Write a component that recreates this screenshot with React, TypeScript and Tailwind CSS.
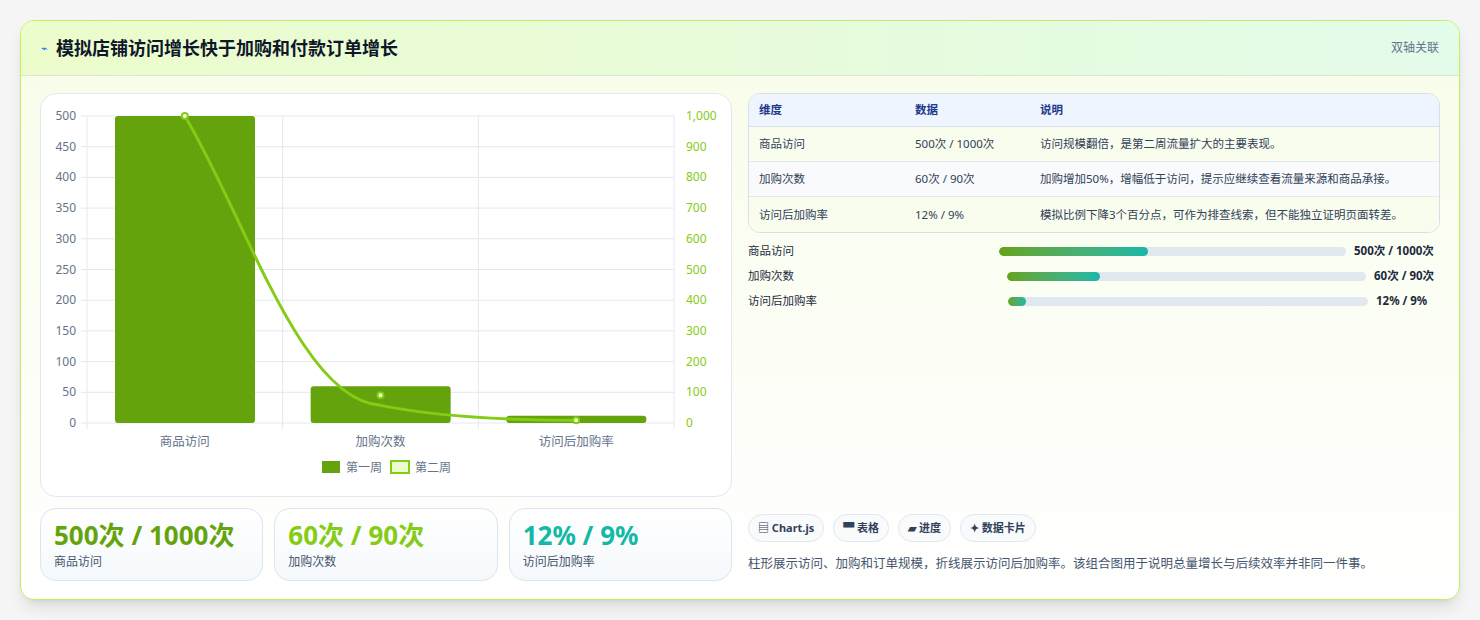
import React from "react";

const font = { fontFamily: '"Noto Sans", "Noto Sans CJK SC", sans-serif' };

function Chart() {
  const x0 = 46, x1 = 633, yTop = 22, yBot = 329;
  const h = yBot - yTop;
  const ticksL = [500, 450, 400, 350, 300, 250, 200, 150, 100, 50, 0];
  const ticksR = [1000, 900, 800, 700, 600, 500, 400, 300, 200, 100, 0];
  const cw = (x1 - x0) / 3;
  const cats = ["商品访问", "加购次数", "访问后加购率"];
  const w1 = [500, 60, 12];
  const w2 = [1000, 90, 9];
  const yl = (v: number) => yBot - (v / 500) * h;
  const yr = (v: number) => yBot - (v / 1000) * h;
  const pts = w2.map((v, i) => [x0 + cw * (i + 0.5), yr(v)]);
  const path = `M${pts[0][0]},${pts[0][1]} C${pts[0][0] + 60},${pts[0][1] + 100} ${pts[1][0] - 80},${pts[1][1] + 5} ${pts[1][0]},${pts[1][1] + 10} C${pts[1][0] + 60},${pts[1][1] + 22} ${pts[2][0] - 60},${pts[2][1]} ${pts[2][0]},${pts[2][1]}`;
  return (
    <svg width="690" height="400" className="block" style={font}>
      {ticksL.map((t, i) => {
        const y = yTop + (h / 10) * i;
        return (
          <g key={t}>
            <line x1={x0 - 6} x2={x1} y1={y} y2={y} stroke="#e2e8f0" strokeWidth="1" />
            <text x={x0 - 11} y={y + 4} textAnchor="end" fontSize="12" fill="#64748b">{t}</text>
            <text x={x1 + 12} y={y + 4} fontSize="12" fill="#84cc16">{ticksR[i].toLocaleString("en-US")}</text>
          </g>
        );
      })}
      {[0, 1, 2, 3].map((i) => (
        <line key={i} x1={x0 + cw * i} x2={x0 + cw * i} y1={yTop} y2={yBot + 6} stroke="#e2e8f0" />
      ))}
      {w1.map((v, i) => (
        <rect key={i} x={x0 + cw * i + 28} y={yl(v)} width={140} height={yBot - yl(v)} rx="3" fill="#65a30d" />
      ))}
      <path d={path} fill="none" stroke="#84cc16" strokeWidth="3" />
      {pts.map((p, i) => (
        <circle key={i} cx={p[0]} cy={p[1]} r="3" fill="#f7fee7" stroke="#84cc16" strokeWidth="2" />
      ))}
      {cats.map((c, i) => (
        <text key={c} x={x0 + cw * (i + 0.5)} y={yBot + 23} textAnchor="middle" fontSize="12.5" fill="#64748b">{c}</text>
      ))}
      <rect x="281" y="367" width="18" height="12" fill="#65a30d" />
      <text x="305" y="378" fontSize="12" fill="#64748b">第一周</text>
      <rect x="350" y="367" width="18" height="12" fill="#ecfccb" stroke="#84cc16" strokeWidth="2" />
      <text x="374" y="378" fontSize="12" fill="#64748b">第二周</text>
    </svg>
  );
}

const rows = [
  ["商品访问", "500次 / 1000次", "访问规模翻倍，是第二周流量扩大的主要表现。"],
  ["加购次数", "60次 / 90次", "加购增加50%，增幅低于访问，提示应继续查看流量来源和商品承接。"],
  ["访问后加购率", "12% / 9%", "模拟比例下降3个百分点，可作为排查线索，但不能独立证明页面转差。"],
];

const bars = [
  ["商品访问", "500次 / 1000次", 43, "w-[251px]", "w-[86px]"],
  ["加购次数", "60次 / 90次", 26, "w-[259px]", "w-[66px]"],
  ["访问后加购率", "12% / 9%", 5, "w-[260px]", "w-[64px]"],
] as const;

export default function App() {
  return (
    <div className="w-[1480px] h-[620px] bg-[#f4f5f4] pt-5 px-5" style={font}>
      <div className="h-[580px] rounded-[14px] border border-[#bef264] overflow-hidden bg-gradient-to-b from-[#f8fde9] to-white shadow-lg flex flex-col">
        <div className="h-[55px] flex items-center justify-between px-5 bg-gradient-to-r from-[#ecfccb] to-[#e3fbe9] border-b border-[#dbe7d0]">
          <div className="flex items-center gap-2">
            <span className="text-[11px] text-blue-600">⌁</span>
            <span className="text-[18px] font-bold text-[#0f172a]">模拟店铺访问增长快于加购和付款订单增长</span>
          </div>
          <span className="text-[12px] text-slate-500">双轴关联</span>
        </div>
        <div className="flex gap-4 px-[19px] pt-[17px]">
          <div className="w-[692px] flex flex-col gap-[11px]">
            <div className="h-[404px] rounded-2xl border border-[#e2e8f0] bg-white overflow-hidden">
              <Chart />
            </div>
            <div className="grid grid-cols-3 gap-[11px]">
              {[
                ["500次 / 1000次", "商品访问", "text-[#65a30d]"],
                ["60次 / 90次", "加购次数", "text-[#84cc16]"],
                ["12% / 9%", "访问后加购率", "text-[#14b8a6]"],
              ].map(([v, l, c]) => (
                <div key={l} className="h-[73px] rounded-2xl border border-[#dbe5f0] bg-gradient-to-b from-white to-[#f5f9fc] px-[13px] pt-[8px]">
                  <div className={`text-[26px] font-bold leading-[36px] ${c}`}>{v}</div>
                  <div className="text-[12px] text-slate-600">{l}</div>
                </div>
              ))}
            </div>
          </div>
          <div className="w-[692px] flex flex-col justify-between h-[488px]">
            <div>
              <div className="rounded-xl border border-[#d5dee9] overflow-hidden text-[11.5px]">
                <div className="flex h-[33px] items-center bg-[#eef5fe] text-[#1e3a8a] font-semibold border-b border-[#d5dee9]">
                  <div className="w-[166px] pl-[10px]">维度</div>
                  <div className="w-[125px]">数据</div>
                  <div>说明</div>
                </div>
                {rows.map((r, i) => (
                  <div key={i} className={`flex h-[35px] items-center text-slate-700 ${i < 2 ? "border-b border-[#e2e8f0]" : ""} ${i === 1 ? "bg-[#f8fafc]" : "bg-[#f8fdee]"}`}>
                    <div className="w-[166px] pl-[10px]">{r[0]}</div>
                    <div className="w-[125px]">{r[1]}</div>
                    <div>{r[2]}</div>
                  </div>
                ))}
              </div>
              <div className="mt-[11px] flex flex-col gap-[11px] text-[11.5px]">
                {bars.map(([l, v, p, lw, vw]) => (
                  <div key={l} className="flex items-center h-[14px]">
                    <div className={`${lw} text-slate-800`}>{l}</div>
                    <div className="flex-1 h-[9px] rounded-full bg-[#e2e8f0] overflow-hidden">
                      <div className="h-full rounded-full bg-gradient-to-r from-[#65a30d] to-[#14b8a6]" style={{ width: `${p}%` }} />
                    </div>
                    <div className={`ml-2 font-bold text-slate-800 ${vw}`}>{v}</div>
                  </div>
                ))}
              </div>
            </div>
            <div className="pb-[7px]">
              <div className="flex gap-[9px]">
                {["▤ Chart.js", "▀ 表格", "▰ 进度", "✦ 数据卡片"].map((t) => (
                  <span key={t} className="h-[28px] px-[9px] rounded-full border border-[#e2e8f0] bg-[#f8fafc] text-[11px] font-bold text-slate-700 flex items-center">{t}</span>
                ))}
              </div>
              <div className="mt-[13px] text-[12.5px] text-slate-600">柱形展示访问、加购和订单规模，折线展示访问后加购率。该组合图用于说明总量增长与后续效率并非同一件事。</div>
            </div>
          </div>
        </div>
      </div>
    </div>
  );
}
